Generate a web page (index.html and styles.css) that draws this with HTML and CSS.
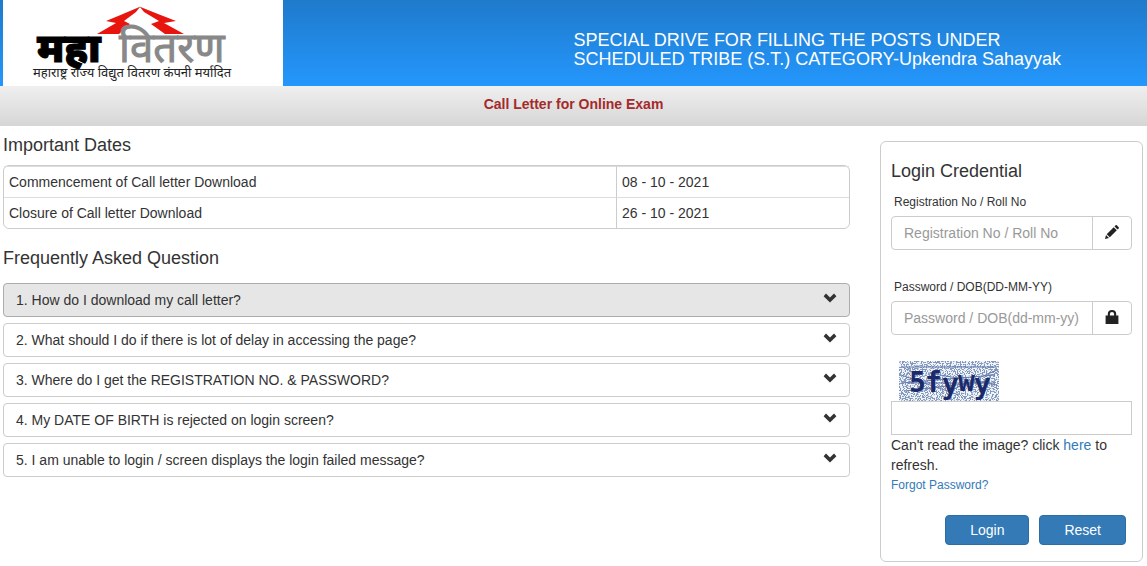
FILE: index.html
```html
<!DOCTYPE html>
<html lang="en">
<head>
<meta charset="utf-8">
<title>Call Letter for Online Exam</title>
<link rel="stylesheet" href="styles.css">
</head>
<body>
<svg class="defs" aria-hidden="true">
  <symbol id="chevron" viewBox="0 0 14 14"><path d="M.6 5.2 3 2.6 7 6.4l4-3.8 2.4 2.6L7 11.6z"/></symbol>
</svg>
<header class="banner">
  <svg class="logo" viewBox="0 0 280 86" role="img" aria-label="महावितरण">
    <path fill="none" stroke="#b9a9a6" d="M119 15 137 7 155 15"/>
    <path fill="#e8150f" d="M137 7 103 21 113 23 94 34H116L127 24 121 21 133 12z"/>
    <path fill="#e8150f" d="M137 7 173 21 161 23 181 34H162L148 24 156 21 141 12z"/>
    <text class="logo-bold" x="34" y="62">महा</text>
    <text class="logo-light" x="116" y="62">वितरण</text>
    <text class="logo-small" x="30" y="77">महाराष्ट्र राज्य विद्युत वितरण कंपनी मर्यादित</text>
  </svg>
  <h1 class="banner-title">SPECIAL DRIVE FOR FILLING THE POSTS UNDER<br>SCHEDULED TRIBE (S.T.) CATEGORY-Upkendra Sahayyak</h1>
</header>
<p class="subbar">Call Letter for Online Exam</p>
<main class="page">
  <div class="info">
    <h2>Important Dates</h2>
    <table class="dates">
      <tr><td class="event">Commencement of Call letter Download</td><td>08 - 10 - 2021</td></tr>
      <tr><td class="event">Closure of Call letter Download</td><td>26 - 10 - 2021</td></tr>
    </table>
    <h2>Frequently Asked Question</h2>
    <div class="faq">
      <button type="button" class="question active">1. How do I download my call letter?<svg class="chev"><use href="#chevron"/></svg></button>
      <button type="button" class="question">2. What should I do if there is lot of delay in accessing the page?<svg class="chev"><use href="#chevron"/></svg></button>
      <button type="button" class="question">3. Where do I get the REGISTRATION NO. &amp; PASSWORD?<svg class="chev"><use href="#chevron"/></svg></button>
      <button type="button" class="question">4. My DATE OF BIRTH is rejected on login screen?<svg class="chev"><use href="#chevron"/></svg></button>
      <button type="button" class="question">5. I am unable to login / screen displays the login failed message?<svg class="chev"><use href="#chevron"/></svg></button>
    </div>
  </div>
  <form class="login">
    <h2>Login Credential</h2>
    <div class="field">
      <label for="reg">Registration No / Roll No</label>
      <div class="group">
        <input id="reg" type="text" placeholder="Registration No / Roll No">
        <span class="addon"><svg viewBox="0 0 14 14"><path d="M0 14 1 10 4 13zM1.700 9.200 8.700 2.200 11.800 5.300 4.800 12.300zM9.500 1.400 10.600.3Q11.200-.2 11.800.3L13.700 2.200Q14.200 2.800 13.700 3.400L12.600 4.500z"/></svg></span>
      </div>
    </div>
    <div class="field">
      <label for="pass">Password / DOB(DD-MM-YY)</label>
      <div class="group">
        <input id="pass" type="password" placeholder="Password / DOB(dd-mm-yy)">
        <span class="addon"><svg viewBox="0 0 14 14"><path fill-rule="evenodd" d="M.6 5.500H2.800V4Q2.800 0 7 0T11.200 4V5.500H13.400V14H.6zM4.900 5.500H9.100V4Q9.100 2 7 2T4.900 4z"/></svg></span>
      </div>
    </div>
    <svg class="captcha" viewBox="0 0 100 40" role="img" aria-label="Captcha">
      <filter id="noise" x="0" y="0" width="1" height="1">
        <feTurbulence type="fractalNoise" baseFrequency="0.8" numOctaves="2" seed="4"/>
        <feColorMatrix values="0 0 0 0 .24  0 0 0 0 .31  0 0 0 0 .5  16 0 0 0 -7.8"/>
      </filter>
      <rect width="100" height="40" fill="#eef6fc"/>
      <rect width="100" height="40" filter="url(#noise)"/>
      <path fill="none" stroke="#6478ac" d="M4 6H98M2 22 96 14M6 30 90 20M30 12 98 24M2 14 60 34M50 30 98 9M8 22H96"/>
      <text class="captcha-text" x="10 26 43 59 75" y="31 31 33 30 33">5fywy</text>
    </svg>
    <input class="code" type="text" aria-label="Captcha text">
    <p class="hint">Can't read the image? click <a href="#">here</a> to refresh.</p>
    <a class="forgot" href="#">Forgot Password?</a>
    <div class="actions">
      <button type="submit">Login</button>
      <button type="reset">Reset</button>
    </div>
  </form>
</main>
</body>
</html>
```
FILE: styles.css
```css
* { box-sizing: border-box; }
body {
  margin: 0;
  background: #fff;
  color: #333;
  font: 14px/20px "Liberation Sans", Arial, sans-serif;
}
button, input { font: inherit; color: inherit; }
a { color: #337ab7; text-decoration: none; }
h2 { margin: 0; font-size: 18px; font-weight: 400; line-height: 20px; }
.defs { display: none; }

.banner {
  display: flex;
  align-items: flex-start;
  justify-content: space-between;
  background: linear-gradient(#1f7acb, #2497fd);
}
.logo { width: 280px; height: 86px; margin-left: 3px; background: #fff; }
.logo-bold, .logo-light, .logo-small { font-family: "Noto Sans Devanagari", "Noto Sans", sans-serif; }
.logo-bold { font-size: 40px; font-weight: 900; fill: #000; stroke: #000; }
.logo-light { font-size: 42px; fill: #888; stroke: #888; }
.logo-small { font-size: 13px; font-weight: 400; fill: #222; }
.banner-title {
  width: 50%;
  margin: 0;
  padding-top: 31px;
  color: #fff;
  font-size: 18px;
  font-weight: 400;
  line-height: 19px;
}
.subbar {
  margin: 0;
  padding: 8px 0 12px;
  background: linear-gradient(#efefef, #d6d6d6);
  color: #a52a2a;
  font-weight: 700;
  text-align: center;
}

.page {
  display: grid;
  grid-template-columns: 1fr 263px;
  align-items: start;
  gap: 30px;
  padding: 0 4px 4px 3px;
}
.info { padding-top: 9px; }
.dates {
  width: 100%;
  margin: 10px 0 19px;
  border: 1px solid #ccc;
  border-radius: 6px;
  border-spacing: 0;
}
.dates td { padding: 5px; border-top: 1px solid #ddd; }
.dates td + td { border-left: 1px solid #ccc; }
.dates .event { width: 612px; }
.faq { display: grid; gap: 6px; margin-top: 15px; }
.question {
  display: flex;
  align-items: flex-start;
  justify-content: space-between;
  padding: 6px 12px;
  border: 1px solid #ccc;
  border-radius: 4px;
  background: #fff;
  text-align: left;
}
.question.active { background: #e6e6e6; border-color: #adadad; }
.chev { width: 14px; height: 14px; margin-top: 1px; fill: #333; }

.login {
  display: flex;
  flex-direction: column;
  margin-top: 15px;
  padding: 19px 10px 16px;
  border: 1px solid #ccc;
  border-radius: 6px;
}
.field { margin-bottom: 26px; }
.field label { display: block; padding: 11px 3px 4px; font-size: 12px; }
.field + .field { margin-top: -10px; }
.group { display: flex; border: 1px solid #ccc; border-radius: 4px; }
.group input {
  flex: 1;
  min-width: 0;
  height: 32px;
  padding: 0 12px;
  border: 0;
  background: none;
}
.group input::placeholder { color: #999; }
.addon {
  display: flex;
  align-items: flex-start;
  justify-content: center;
  width: 39px;
  padding-top: 8px;
  border-left: 1px solid #ccc;
}
.addon svg { width: 14px; height: 14px; fill: #222; }
.captcha { width: 100px; height: 40px; margin-left: 8px; }
.captcha-text { font: 700 28px "DejaVu Sans Mono", monospace; fill: #1b2a6b; }
.code { height: 34px; padding: 0 12px; border: 1px solid #ccc; }
.hint { margin: 0; }
.forgot { align-self: flex-start; font-size: 12px; }
.actions { display: flex; justify-content: flex-end; gap: 10px; margin-top: 20px; padding-right: 6px; }
.actions button {
  padding: 4px 24px;
  border: 1px solid #2e6da4;
  border-radius: 4px;
  background: #337ab7;
  color: #fff;
}
```
